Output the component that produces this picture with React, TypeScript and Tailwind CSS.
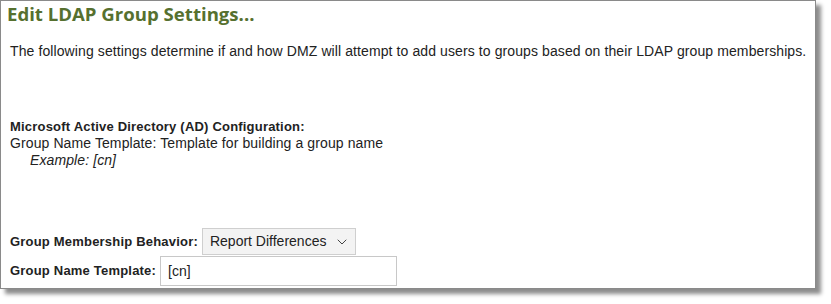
import { ChevronDown } from 'lucide-react'

export default function App() {
  return (
    <div className="h-[304px] w-[831px] bg-white" style={{ fontFamily: '"Liberation Sans", Arial, sans-serif' }}>
      <div className="h-[289px] w-[816px] overflow-hidden border border-[#8a8a8a] bg-white shadow-[5px_5px_4px_rgba(0,0,0,0.45)]">
        {/* Header */}
        <h1 className="ml-[6px] mt-[2px] text-[18.6px] font-bold leading-[22px] text-[#56702f]" style={{ fontFamily: '"Open Sans", "DejaVu Sans", sans-serif' }}>
          Edit LDAP Group Settings...
        </h1>

        <p className="ml-[9px] mt-[19px] text-[14px] leading-[15px] tracking-[0.1px] text-[#222]">
          The following settings determine if and how DMZ will attempt to add users to groups based on their LDAP group memberships.
        </p>

        {/* AD section */}
        <div className="ml-[9px] mt-[59px] text-[14px] leading-[17px] tracking-[0.1px] text-[#222]">
          <div className="text-[13px] font-bold tracking-[0.2px]">Microsoft Active Directory (AD) Configuration:</div>
          <div>Group Name Template: Template for building a group name</div>
          <div className="pl-[20px] italic">Example: [cn]</div>
        </div>

        {/* Form */}
        <div className="ml-[9px] mt-[59px] flex flex-col gap-[1px] text-[14px] text-[#222]">
          <div className="flex items-center gap-[4px]">
            <span className="text-[13px] font-bold tracking-[0.2px]">Group Membership Behavior:</span>
            <div className="flex h-[27px] w-[154px] items-center justify-between border border-[#cfcfcf] bg-[#f3f3f3] pl-[7px] pr-[5px]">
              <span>Report Differences</span>
              <ChevronDown size={16} strokeWidth={1.5} className="text-[#444]" />
            </div>
          </div>
          <div className="flex items-center gap-[4px]">
            <span className="text-[13px] font-bold tracking-[0.2px]">Group Name Template:</span>
            <div className="flex h-[30px] w-[237px] items-center border border-[#c8c8c8] bg-white pl-[7px]">[cn]</div>
          </div>
        </div>
      </div>
    </div>
  )
}
